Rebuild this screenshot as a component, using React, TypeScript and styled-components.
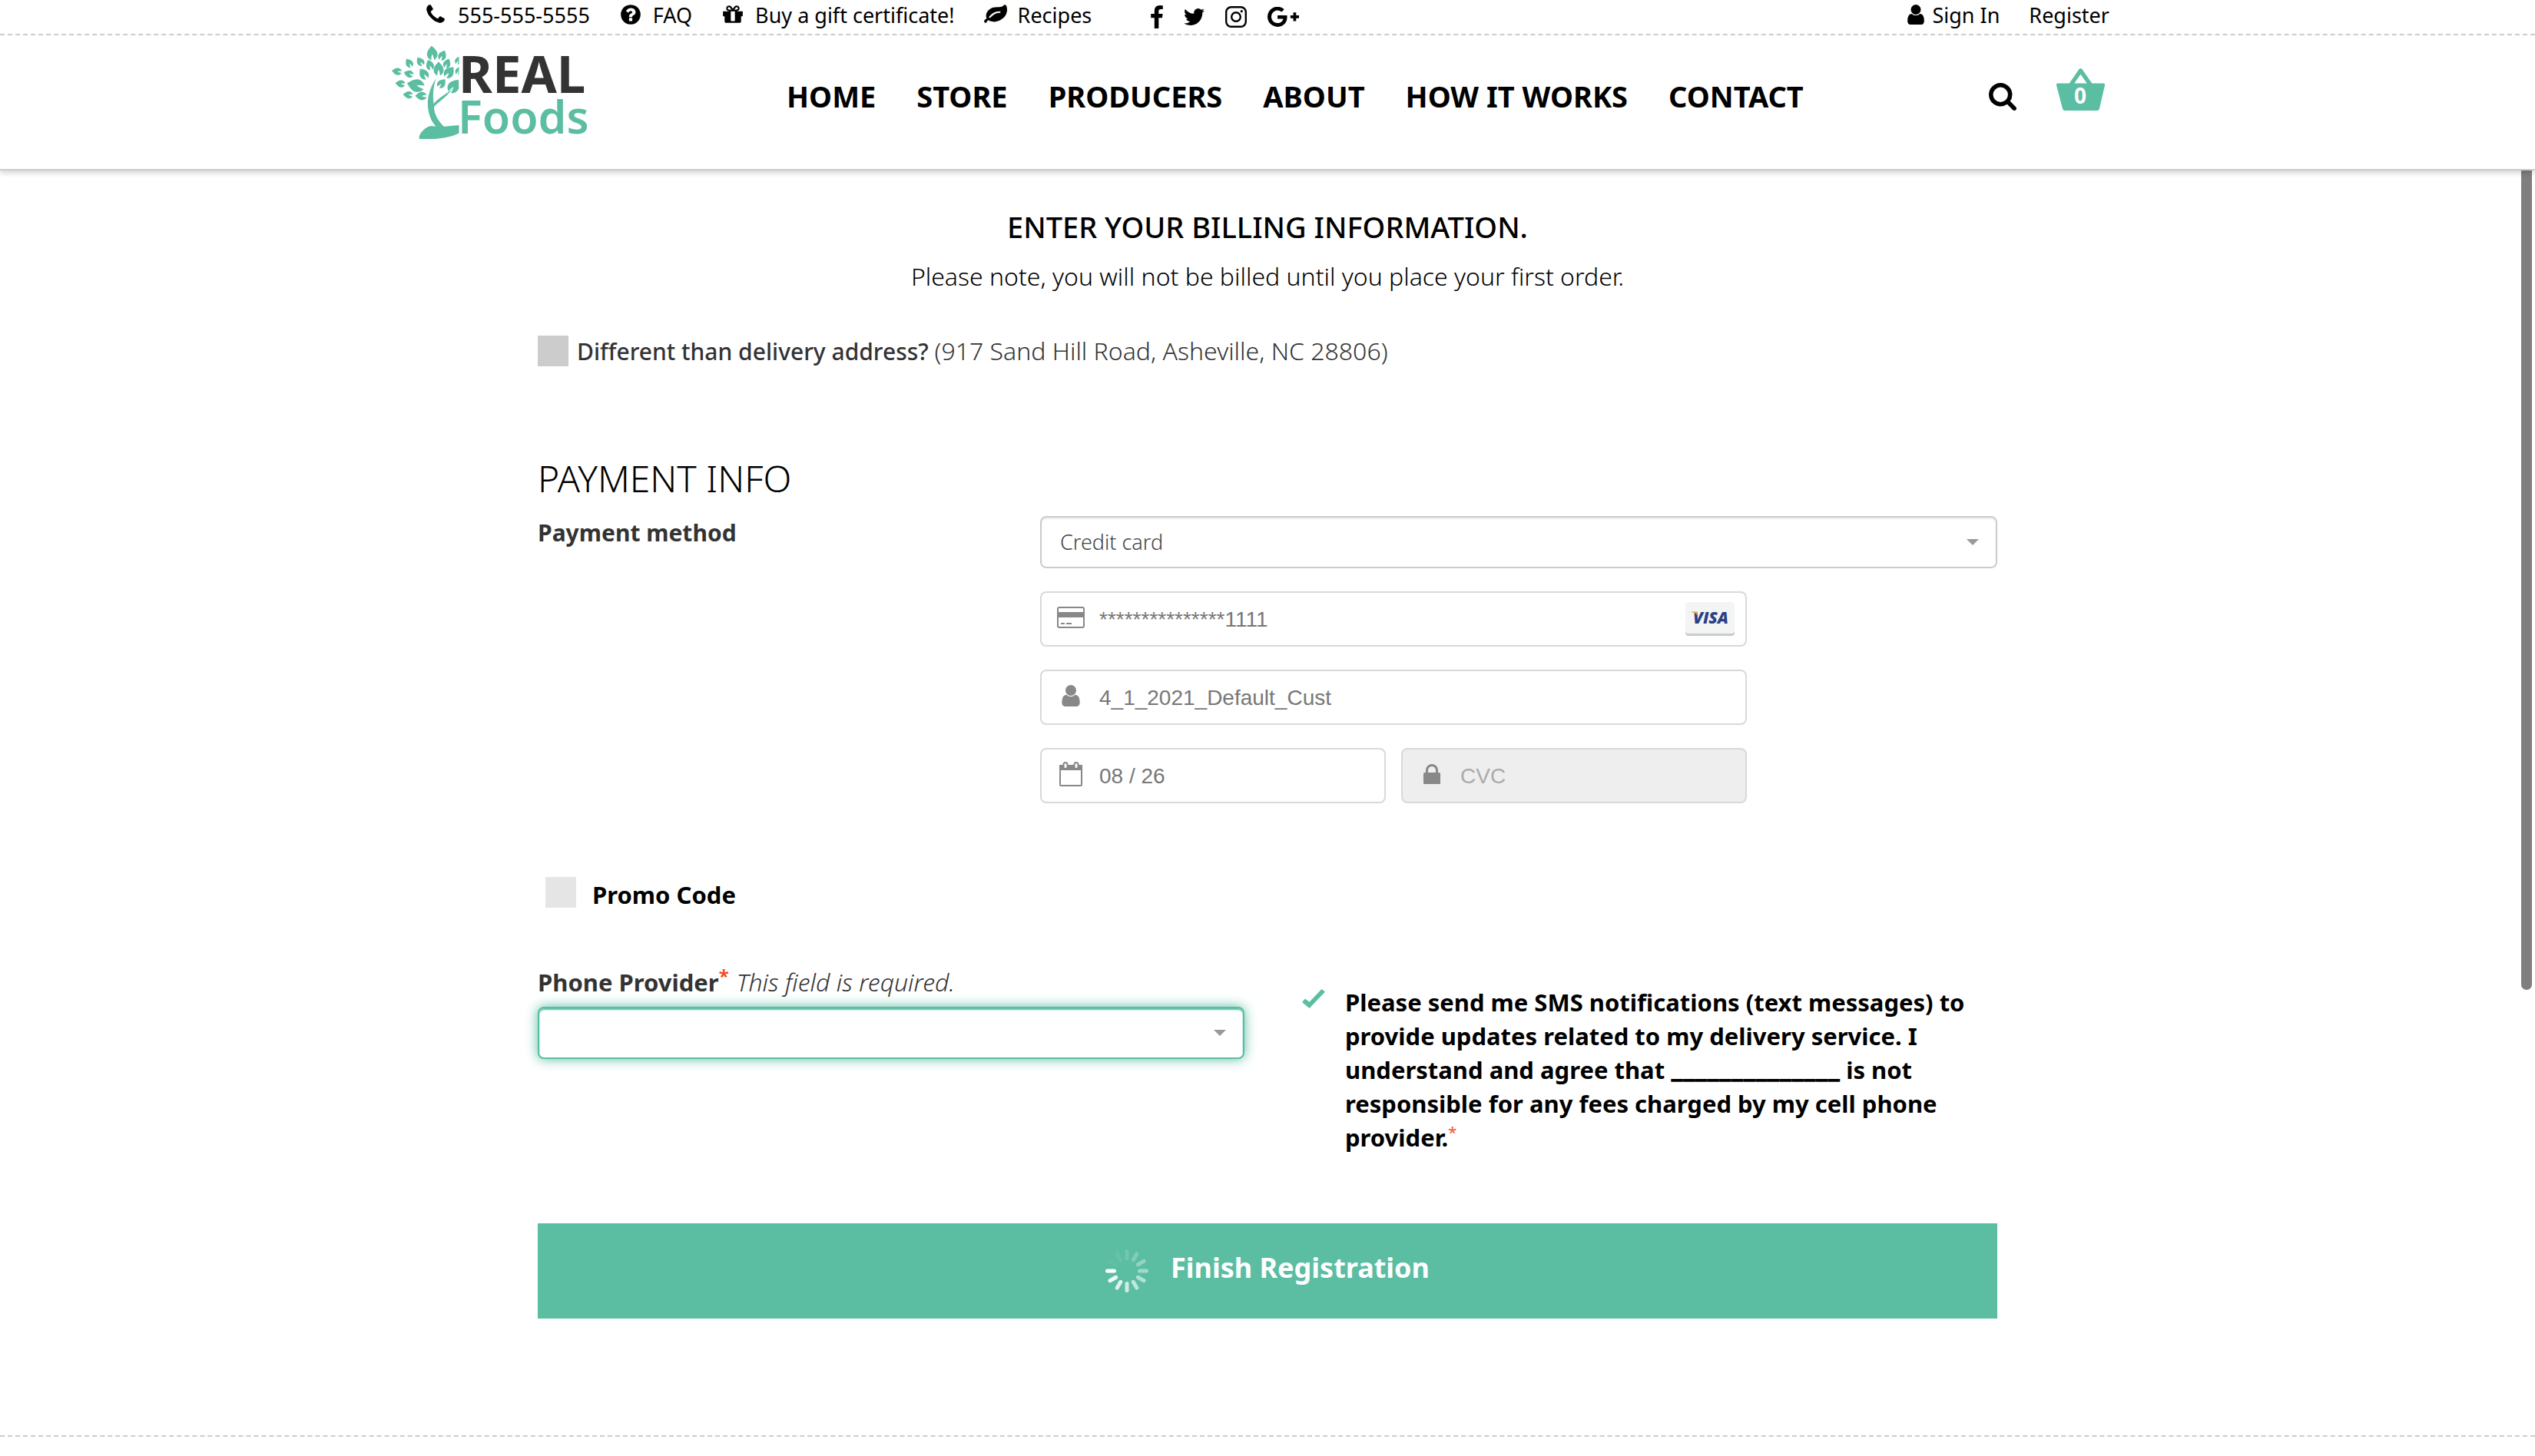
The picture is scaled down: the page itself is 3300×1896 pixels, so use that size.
import React from "react";
import styled, { createGlobalStyle, css } from "styled-components";

const brand = "#5bbda2";
const rule = "#cccccc";
const danger = "#f04e23";
const sans = `"Noto Sans", "Open Sans", sans-serif`;

const GlobalStyle = createGlobalStyle`
  *, *::before, *::after { box-sizing: border-box; }
  body { margin: 0; background: #fff; color: #000; font-family: ${sans}; }
  h1, h2, p { margin: 0; }
  a { color: inherit; text-decoration: none; }
  button, input, select { font-family: inherit; margin: 0; }
`;

/* ---------- page frame ---------- */

const Page = styled.div`
  position: relative;
  display: flex;
  flex-direction: column;
  min-height: 100vh;
  overflow: hidden;
`;

const ScrollThumb = styled.div`
  position: absolute;
  top: 0;
  right: 4px;
  width: 14px;
  height: 68vh;
  border-radius: 7px;
  background: #7f7f7f;
`;

const Header = styled.header`
  position: relative;
  z-index: 1;
  background: #fff;
  border-bottom: 2px solid ${rule};
  box-shadow: 0 4px 6px rgba(0, 0, 0, 0.15);
`;

const Container = styled.div`
  display: flex;
  align-items: center;
  max-width: 2280px;
  margin: 0 auto;
`;

/* ---------- top bar ---------- */

const TopBar = styled.div`
  border-bottom: 2px dashed ${rule};
  padding-bottom: 4px;
`;

const TopBarInner = styled(Container)`
  padding: 0 44px 0 42px;
  font-size: 27px;
  line-height: 40px;
`;

const TopLinks = styled.nav`
  display: flex;
  gap: 38px;
`;

const TopLink = styled.a`
  display: flex;
  align-items: center;
  gap: 14px;
  white-space: nowrap;

  svg { margin-bottom: 2px; }
`;

const SocialLinks = styled.nav`
  display: flex;
  align-items: center;
  gap: 27px;
  margin-left: 77px;
  padding-top: 4px;
`;

const SocialLink = styled.a`
  display: flex;
`;

const AccountLinks = styled.nav`
  display: flex;
  gap: 38px;
  margin-left: auto;
`;

const AccountLink = styled(TopLink)`
  gap: 10px;
`;

/* ---------- main navigation ---------- */

const Masthead = styled(Container)`
  padding: 14px 50px 39px 0;
`;

const LogoLink = styled.a`
  display: flex;
`;

const MainNav = styled.nav`
  display: flex;
  gap: 53px;
  margin-left: 244px;
  padding-top: 8px;
  font-size: 38px;
  font-weight: 700;
  line-height: 50px;
  white-space: nowrap;
`;

const Tools = styled.div`
  display: flex;
  align-items: center;
  gap: 52px;
  margin-left: auto;
`;

const SearchButton = styled.button`
  display: flex;
  padding: 10px 0 0;
  border: 0;
  background: none;
  color: #000;
`;

const BasketLink = styled.a`
  display: flex;
  padding-bottom: 8px;
`;

/* ---------- form ---------- */

const Main = styled.main`
  width: 100%;
  max-width: 1900px;
  margin: 0 auto;
  padding: 49px 0 152px;
`;

const Title = styled.h1`
  font-size: 38px;
  font-weight: 500;
  line-height: 48px;
  text-align: center;
`;

const Lead = styled.p`
  margin-top: 19px;
  font-size: 32px;
  font-weight: 300;
  line-height: 44px;
  text-align: center;
`;

const CheckRow = styled.div<{ $top: number; $indent?: number; $gap: number }>`
  display: flex;
  align-items: center;
  gap: ${(p) => p.$gap}px;
  height: 44px;
  margin-top: ${(p) => p.$top}px;
  padding-left: ${(p) => p.$indent ?? 0}px;
`;

const TickBox = styled.input<{ $tone: string }>`
  appearance: none;
  flex: none;
  width: 40px;
  height: 40px;
  background: ${(p) => p.$tone};
`;

const AddressLabel = styled.label`
  color: #333;
  font-size: 30px;
  font-weight: 500;
  line-height: 44px;
`;

const Address = styled.span`
  font-size: 32px;
  font-weight: 300;
`;

const PromoLabel = styled.label`
  padding-top: 6px;
  font-size: 31px;
  font-weight: 700;
  line-height: 44px;
`;

const SectionTitle = styled.h2`
  margin: 114px 0 19px;
  font-size: 48px;
  font-weight: 300;
  line-height: 60px;
`;

const PaymentGrid = styled.div`
  display: grid;
  grid-template-columns: 654px 1fr;
  align-items: start;
`;

const FieldLabel = styled.label`
  color: #333;
  font-size: 30px;
  font-weight: 700;
  line-height: 44px;
`;

const PhoneLabel = styled(FieldLabel)`
  font-size: 31px;
`;

const PaymentFields = styled.div`
  display: grid;
  gap: 30px;
`;

const SelectWrap = styled.div`
  position: relative;
  display: flex;

  svg {
    position: absolute;
    top: 30px;
    right: 24px;
    pointer-events: none;
  }
`;

const Select = styled.select<{ $active?: boolean }>`
  appearance: none;
  width: 100%;
  height: 68px;
  padding: 0 60px 2px 24px;
  border: 2px solid ${rule};
  border-radius: 8px;
  outline: 0;
  background: #fff;
  color: #444;
  font-size: 27px;
  font-weight: 300;
  box-shadow: inset 0 2px 2px rgba(0, 0, 0, 0.075);

  ${(p) =>
    p.$active &&
    css`
      border-color: ${brand};
      box-shadow: inset 0 2px 2px ${brand}, 0 0 16px ${brand};
    `}
`;

const CardFields = styled.div`
  display: grid;
  grid-template-columns: repeat(2, minmax(0, 1fr));
  gap: 30px 20px;
  max-width: 920px;
`;

const Field = styled.div<{ $wide?: boolean; $off?: boolean }>`
  grid-column: ${(p) => (p.$wide ? "1 / -1" : "auto")};
  display: flex;
  align-items: center;
  gap: 19px;
  height: 72px;
  padding: 0 14px 0 20px;
  border: 2px solid #d9d9d9;
  border-radius: 8px;
  background: ${(p) => (p.$off ? "#eee" : "#fff")};
`;

const FieldIcon = styled.span`
  display: flex;
  flex: none;
  justify-content: center;
  width: 36px;
  padding-bottom: 4px;
  color: #888;
`;

const FieldInput = styled.input`
  flex: 1;
  min-width: 0;
  height: 100%;
  padding: 2px 0 0;
  border: 0;
  outline: 0;
  background: none;
  color: #777;
  font-family: "Liberation Sans", Arial, sans-serif;
  font-size: 28px;
  font-weight: 300;

  &::placeholder { color: #aaa; opacity: 1; }
`;

const PhoneGrid = styled.div`
  display: grid;
  grid-template-columns: 920px 1fr;
  gap: 75px;
  align-items: start;
  margin-top: 73px;
`;

const PhoneField = styled.div`
  display: grid;
  gap: 10px;
`;

const LabelLine = styled.div`
  height: 44px;
  font-size: 31px;
  line-height: 44px;
`;

const Asterisk = styled.sup`
  color: ${danger};
  font-size: 24px;
  line-height: 0;
`;

const LightAsterisk = styled(Asterisk)`
  font-size: 20px;
  font-weight: 400;
`;

const Hint = styled.em`
  margin-left: 10px;
  color: #333;
  font-size: 32px;
  font-weight: 300;
  line-height: 0;
`;

const Consent = styled.div`
  display: flex;
  align-items: flex-start;
  gap: 26px;
  padding-top: 26px;
`;

const ConsentBox = styled.span`
  position: relative;
  display: flex;
  flex: none;
  width: 30px;
  padding-top: 5px;

  input {
    position: absolute;
    inset: 0;
    width: 100%;
    height: 100%;
    opacity: 0;
  }
`;

const ConsentLabel = styled.label`
  font-size: 31px;
  font-weight: 700;
  line-height: 44px;
`;

const Blank = styled.span`
  font-family: Inter, sans-serif;
  font-size: 33px;
  line-height: 0;
`;

const SubmitButton = styled.button`
  display: flex;
  align-items: center;
  justify-content: center;
  gap: 29px;
  width: 100%;
  height: 124px;
  margin-top: 90px;
  padding: 0;
  border: 0;
  background: ${brand};
  color: #fff;
  font-size: 36px;
  font-weight: 700;
  line-height: 50px;
`;

const SubmitText = styled.span`
  padding-bottom: 8px;
`;

const Footer = styled.footer`
  border-top: 2px dashed ${rule};
`;

/* ---------- icons ---------- */

type GlyphProps = { d: string; box?: string; w?: number; h?: number };

const Glyph = ({ d, box = "0 0 1792 1792", w = 30, h = 30 }: GlyphProps) => (
  <svg width={w} height={h} viewBox={box} fill="currentColor" aria-hidden="true">
    <path d={d} />
  </svg>
);

const phonePath =
  "M1600 1240q0 27-10 70.5t-21 68.5q-21 50-122 106-94 51-186 51-27 0-53-3.5t-57.5-12.5-47-14.5-55.5-20.5-49-18q-98-35-175-83-127-79-264-216t-216-264q-48-77-83-175-3-9-18-49t-20.5-55.5-14.5-47-12.5-57.5-3.5-53q0-92 51-186 56-101 106-122 25-11 68.5-21t70.5-10q14 0 21 3 18 6 53 76 11 19 30 54t35 63.5 31 53.5q3 4 17.5 25t21.5 35.5 7 28.5q0 20-28.5 50t-62 55-62 53-28.5 46q0 9 5 22.5t8.5 20.5 14 24 11.5 19q76 137 174 235t235 174q2 1 19 11.5t24 14 20.5 8.5 22.5 5q18 0 46-28.5t53-62 55-62 50-28.5q14 0 28.5 7t35.5 21.5 25 17.5q25 15 53.5 31t63.5 35 54 30q70 35 76 53 3 7 3 21z";
const questionPath =
  "M1024 1376v-192q0-14-9-23t-23-9h-192q-14 0-23 9t-9 23v192q0 14 9 23t23 9h192q14 0 23-9t9-23zm256-672q0-88-55.5-163t-138.5-116-170-41q-243 0-371 213-15 24 8 42l132 100q7 6 19 6 16 0 25-12 53-68 86-92 34-24 86-24 48 0 85.5 26t37.5 59q0 38-20 61t-68 45q-63 28-115.5 86.5t-52.5 125.5v36q0 14 9 23t23 9h192q14 0 23-9t9-23q0-19 21.5-49.5t54.5-49.5q32-18 49-28.5t46-35 44.5-48 28-60.5 12.5-81zm384 192q0 209-103 385.5t-279.5 279.5-385.5 103-385.5-103-279.5-279.5-103-385.5 103-385.5 279.5-279.5 385.5-103 385.5 103 279.5 279.5 103 385.5z";
const giftPath =
  "M1056 1356v-716h-320v716q0 25 18 38.5t46 13.5h192q28 0 46-13.5t18-38.5zm-456-844h195l-126-161q-26-31-69-31-40 0-68 28t-28 68 28 68 68 28zm688-96q0-40-28-68t-68-28q-43 0-69 31l-125 161h194q40 0 68-28t28-68zm376 256v320q0 14-9 23t-23 9h-96v416q0 40-28 68t-68 28h-1088q-40 0-68-28t-28-68v-416h-96q-14 0-23-9t-9-23v-320q0-14 9-23t23-9h440q-93 0-158.5-65.5t-65.5-158.5 65.5-158.5 158.5-65.5q107 0 168 77l128 165 128-165q61-77 168-77 93 0 158.5 65.5t65.5 158.5-65.5 158.5-158.5 65.5h440q14 0 23 9t9 23z";
const leafPath =
  "M1280 704q0-26-19-45t-45-19q-172 0-318 49.5t-259.5 134-235.5 219.5q-19 21-19 45 0 26 19 45t45 19q24 0 45-19 27-24 74-71t67-66q137-124 268.5-176t313.5-52q26 0 45-19t19-45zm512-198q0 95-20 193-46 224-184.5 383t-357.5 268q-214 108-438 108-148 0-286-47-15-5-88-42t-96-37q-16 0-39.5 32t-45 70-52.5 70-60 32q-43 0-63.5-17.5t-45.5-59.5q-2-4-6-11t-5.5-10-3-9.5-1.5-13.5q0-35 31-73.5t68-65.5 68-56 31-48q0-4-14-38t-16-44q-9-51-9-104 0-115 43.5-220t119-184.5 170.5-139 204-95.5q55-18 145-25.5t179.5-9 178.5-6 163.5-24 113.5-56.5l29.5-29.5 29.5-28 27-20 36.5-16 43.5-4.5q39 0 70.5 46t47.5 112 24 124 8 96z";
const facebookPath =
  "M1343 12v264h-157q-86 0-116 36t-30 108v189h293l-39 296h-254v759h-306v-759h-255v-296h255v-218q0-186 104-288.5t277-102.5q147 0 228 12z";
const twitterPath =
  "M1684 408q-67 98-162 167 1 14 1 42 0 130-38 259.5t-115.5 248.5-184.5 210.5-258 146-323 54.5q-271 0-496-145 35 4 78 4 225 0 401-138-105-2-188-64.5t-114-159.5q33 5 61 5 43 0 85-11-112-23-185.5-111.5t-73.5-205.5v-4q68 38 146 41-66-44-105-115t-39-154q0-88 44-163 121 149 294.5 238.5t371.5 99.5q-8-38-8-74 0-134 94.5-228.5t228.5-94.5q140 0 236 102 109-21 205-78-37 115-142 178 93-10 186-50z";
const googlePath =
  "M1437 913q0 208-87 370.5t-248 254-369 91.5q-149 0-285-58t-234-156-156-234-58-285 58-285 156-234 234-156 285-58q286 0 491 192l-199 191q-117-113-292-113-123 0-227.5 62t-165.5 168.5-61 232.5 61 232.5 165.5 168.5 227.5 62q83 0 152.5-23t114.5-57.5 78.5-78.5 49-83 21.5-74h-416v-252h692q12 63 12 122zm867-122v210h-209v209h-210v-209h-209v-210h209v-209h210v209h209z";
const userPath =
  "M1536 1399q0 109-62.5 187t-150.5 78h-854q-88 0-150.5-78t-62.5-187q0-85 8.5-160.5t31.5-152 58.5-131 94-89 134.5-34.5q131 128 313 128t313-128q76 0 134.5 34.5t94 89 58.5 131 31.5 152 8.5 160.5zm-256-887q0 159-112.5 271.5t-271.5 112.5-271.5-112.5-112.5-271.5 112.5-271.5 271.5-112.5 271.5 112.5 112.5 271.5z";
const searchPath =
  "M1216 832q0-185-131.5-316.5t-316.5-131.5-316.5 131.5-131.5 316.5 131.5 316.5 316.5 131.5 316.5-131.5 131.5-316.5zm512 832q0 52-38 90t-90 38q-54 0-90-38l-343-342q-179 124-399 124-143 0-273.5-55.5t-225-150-150-225-55.5-273.5 55.5-273.5 150-225 225-150 273.5-55.5 273.5 55.5 225 150 150 225 55.5 273.5q0 220-124 399l343 343q37 37 37 90z";

const InstagramIcon = () => (
  <svg width="28" height="28" viewBox="0 0 28 28" fill="none" stroke="currentColor" aria-hidden="true">
    <rect x="1.2" y="1.2" width="25.6" height="25.6" rx="6.5" strokeWidth="2.4" />
    <circle cx="14" cy="14" r="5.8" strokeWidth="2.4" />
    <circle cx="21.3" cy="6.7" r="1.6" fill="currentColor" stroke="none" />
  </svg>
);

const CardIcon = () => (
  <svg width="36" height="28" viewBox="0 0 36 28" aria-hidden="true">
    <rect x="1" y="1" width="34" height="26" rx="2" fill="none" stroke="currentColor" strokeWidth="2" />
    <path d="M1 7h34v7H1zM5 21h5v2H5zM12 21h7v2h-7z" fill="currentColor" />
  </svg>
);

const CalendarIcon = () => (
  <svg width="30" height="32" viewBox="0 0 30 32" aria-hidden="true">
    <path d="M1 5h28v25a1 1 0 0 1-1 1H2a1 1 0 0 1-1-1z" fill="none" stroke="currentColor" strokeWidth="2" />
    <path d="M0 6a2 2 0 0 1 2-2h26a2 2 0 0 1 2 2v5H0z" fill="currentColor" />
    <rect x="5.5" y="1" width="5" height="8" rx="2.5" fill="#fff" stroke="currentColor" strokeWidth="2" />
    <rect x="19.5" y="1" width="5" height="8" rx="2.5" fill="#fff" stroke="currentColor" strokeWidth="2" />
  </svg>
);

const LockIcon = () => (
  <svg width="22" height="26" viewBox="0 0 22 26" aria-hidden="true">
    <path d="M4.5 12V8a6.5 6.5 0 0 1 13 0v4" fill="none" stroke="currentColor" strokeWidth="3" />
    <rect y="11" width="22" height="15" rx="1.5" fill="currentColor" />
  </svg>
);

const Caret = () => (
  <svg width="16" height="8" viewBox="0 0 16 8" aria-hidden="true">
    <path d="M0 0h16L8 8z" fill="#999" />
  </svg>
);

const CheckIcon = () => (
  <svg width="30" height="25" viewBox="0 0 30 25" aria-hidden="true">
    <path d="M0 17l4-4.500 5.500 4.200L25.500 0 30 3.500 9.500 25z" fill={brand} />
  </svg>
);

const VisaBadge = () => (
  <svg width="64" height="44" viewBox="0 0 64 44" role="img" aria-label="Visa">
    <rect y="2" width="64" height="42" rx="4" fill="#c9cccb" />
    <rect width="64" height="41" rx="4" fill="#f3f5f5" />
    <text x="33" y="28" textAnchor="middle" fontFamily="Open Sans, sans-serif" fontSize="21" fontWeight="800" fontStyle="italic" fill="#2b3f87">
      VISA
    </text>
    <path d="M8 12.500h7l2 6c-2-3-5-5-9-5z" fill="#e8a13a" />
  </svg>
);

const BasketIcon = () => (
  <svg width="63" height="55" viewBox="0 0 63 55" role="img" aria-label="Basket">
    <path d="M19 21L31.500 3 44 21" fill="none" stroke={brand} strokeWidth="5.500" strokeLinejoin="round" />
    <path d="M2 19.500h59a2 2 0 0 1 2 2.400L56 52.500a3 3 0 0 1-3 2.500H11a3 3 0 0 1-3-2.500L0 21.900a2 2 0 0 1 2-2.400z" fill={brand} />
    <text x="31" y="46" textAnchor="middle" fontFamily="Noto Sans, sans-serif" fontSize="28" fontWeight="700" fill="#fff">
      0
    </text>
  </svg>
);

/* x, y, rotation and length of every leaf in the crown */
const leaves: [number, number, number, number][] = [
  [52.5, 9, -5, 19], [66, 12, 25, 14], [22.500, 22, -32, 13], [37, 20, -35, 13], [49.500, 24.500, -18, 14],
  [61, 29.500, 0, 18], [72, 22.500, 22, 13], [6.500, 33, -82, 13], [22, 36, -72, 13], [41.500, 36, -35, 16],
  [75, 34, 38, 17], [11, 49, -82, 13], [31, 51, -76, 23], [65, 48.500, 40, 14], [81, 52, 35, 20],
  [21, 63.500, -84, 13], [38, 65, -88, 15], [86.500, 18.500, 20, 11], [87, 32, 22, 11],
];

const Logo = () => (
  <svg width="270" height="121" viewBox="0 0 270 121" overflow="visible" role="img" aria-label="Real Foods">
    <clipPath id="crown">
      <rect width="87.500" height="121" />
    </clipPath>
    <g fill={brand} clipPath="url(#crown)">
      {leaves.map(([x, y, r, s]) => (
        <path
          key={`${x}-${y}`}
          transform={`translate(${x} ${y}) rotate(${r}) scale(${s})`}
          d="M0-.5C.2-.3.38-.1.36.12.34.32.22.42.1.5 .1.35.06.2 0 .06-.06.2-.1.35-.1.5-.22.42-.34.32-.36.12-.38-.1-.2-.3 0-.5z"
        />
      ))}
      <path d="M57.500 42C50 54 46 66 47 79c1 12 6 22 12 27l9-1C60 97 55 88 55 79c8-8 18-14 24-24-8 8-18 12-24.500 20C53 64 54 53 57.500 42z" />
      <path d="M35.500 119c1-6 6-11 12-14 4-2 8 0 13 0s16-1 27.500-2v10c-12 7-34 9-52 8z" />
    </g>
    <text x="87" y="61" fontFamily="Noto Sans, sans-serif" fontSize="67" fontWeight="700" fill="#333">
      REAL
    </text>
    <text x="86" y="114" fontFamily="Noto Sans, sans-serif" fontSize="59" fontWeight="600" fill={brand}>
      Foods
    </text>
  </svg>
);

const Spinner = () => (
  <svg width="56" height="56" viewBox="0 0 56 56" aria-hidden="true">
    {Array.from({ length: 12 }, (_, i) => (
      <rect
        key={i}
        x="25.500"
        y="0"
        width="5"
        height="14"
        rx="2.500"
        fill="#fff"
        opacity={i < 10 ? 0.15 + i * 0.094 : i === 10 ? 0.03 : 0.08}
        transform={`rotate(${i * 30} 28 28)`}
      />
    ))}
  </svg>
);

/* ---------- screen ---------- */

const navItems = ["Home", "Store", "Producers", "About", "How it works", "Contact"];

export default function App() {
  return (
    <>
      <GlobalStyle />
      <Page>
        <Header>
          <TopBar>
            <TopBarInner>
              <TopLinks>
                <TopLink href="#phone"><Glyph d={phonePath} />555-555-5555</TopLink>
                <TopLink href="#faq"><Glyph d={questionPath} />FAQ</TopLink>
                <TopLink href="#gift"><Glyph d={giftPath} />Buy a gift certificate!</TopLink>
                <TopLink href="#recipes"><Glyph d={leafPath} />Recipes</TopLink>
              </TopLinks>
              <SocialLinks>
                <SocialLink href="#facebook" aria-label="Facebook"><Glyph d={facebookPath} box="479 0 864 1664" w={16} h={30} /></SocialLink>
                <SocialLink href="#twitter" aria-label="Twitter"><Glyph d={twitterPath} box="108 256 1576 1280" w={27} h={22} /></SocialLink>
                <SocialLink href="#instagram" aria-label="Instagram"><InstagramIcon /></SocialLink>
                <SocialLink href="#google" aria-label="Google Plus"><Glyph d={googlePath} box="0 180 2304 1450" w={41} h={26} /></SocialLink>
              </SocialLinks>
              <AccountLinks>
                <AccountLink href="#signin"><Glyph d={userPath} box="256 128 1280 1536" w={22} h={26} />Sign In</AccountLink>
                <AccountLink href="#register">Register</AccountLink>
              </AccountLinks>
            </TopBarInner>
          </TopBar>
          <Masthead>
            <LogoLink href="#home"><Logo /></LogoLink>
            <MainNav>
              {navItems.map((item) => (
                <a key={item} href={`#${item}`}>{item.toUpperCase()}</a>
              ))}
            </MainNav>
            <Tools>
              <SearchButton type="button" aria-label="Search"><Glyph d={searchPath} box="64 128 1664 1664" w={36} h={36} /></SearchButton>
              <BasketLink href="#basket"><BasketIcon /></BasketLink>
            </Tools>
          </Masthead>
        </Header>

        <Main>
          <Title>ENTER YOUR BILLING INFORMATION.</Title>
          <Lead>Please note, you will not be billed until you place your first order.</Lead>

          <CheckRow $top={53} $gap={11}>
            <TickBox type="checkbox" id="different" $tone="#ccc" />
            <AddressLabel htmlFor="different">
              Different than delivery address? <Address>(917 Sand Hill Road, Asheville, NC 28806)</Address>
            </AddressLabel>
          </CheckRow>

          <SectionTitle>PAYMENT INFO</SectionTitle>
          <PaymentGrid>
            <FieldLabel htmlFor="method">Payment method</FieldLabel>
            <PaymentFields>
              <SelectWrap>
                <Select id="method" defaultValue="card">
                  <option value="card">Credit card</option>
                </Select>
                <Caret />
              </SelectWrap>
              <CardFields>
                <Field $wide>
                  <FieldIcon><CardIcon /></FieldIcon>
                  <FieldInput aria-label="Card number" defaultValue="***************1111" />
                  <VisaBadge />
                </Field>
                <Field $wide>
                  <FieldIcon><Glyph d={userPath} box="256 128 1280 1536" w={26} h={28} /></FieldIcon>
                  <FieldInput aria-label="Name on card" defaultValue="4_1_2021_Default_Cust" />
                </Field>
                <Field>
                  <FieldIcon><CalendarIcon /></FieldIcon>
                  <FieldInput aria-label="Expiry date" defaultValue="08 / 26" />
                </Field>
                <Field $off>
                  <FieldIcon><LockIcon /></FieldIcon>
                  <FieldInput aria-label="Security code" placeholder="CVC" disabled />
                </Field>
              </CardFields>
            </PaymentFields>
          </PaymentGrid>

          <CheckRow $top={94} $indent={10} $gap={21}>
            <TickBox type="checkbox" id="promo" $tone="#e5e5e5" />
            <PromoLabel htmlFor="promo">Promo Code</PromoLabel>
          </CheckRow>

          <PhoneGrid>
            <PhoneField>
              <LabelLine>
                <PhoneLabel htmlFor="provider">Phone Provider<Asterisk>*</Asterisk></PhoneLabel>
                <Hint>This field is required.</Hint>
              </LabelLine>
              <SelectWrap>
                <Select id="provider" $active defaultValue="">
                  <option value="" />
                </Select>
                <Caret />
              </SelectWrap>
            </PhoneField>
            <Consent>
              <ConsentBox>
                <CheckIcon />
                <input type="checkbox" id="sms" defaultChecked />
              </ConsentBox>
              <ConsentLabel htmlFor="sms">
                Please send me SMS notifications (text messages) to provide updates related to my delivery
                service. I understand and agree that <Blank>______________</Blank> is not responsible for any
                fees charged by my cell phone provider.<LightAsterisk>*</LightAsterisk>
              </ConsentLabel>
            </Consent>
          </PhoneGrid>

          <SubmitButton type="submit">
            <Spinner />
            <SubmitText>Finish Registration</SubmitText>
          </SubmitButton>
        </Main>
        <Footer />
        <ScrollThumb />
      </Page>
    </>
  );
}
